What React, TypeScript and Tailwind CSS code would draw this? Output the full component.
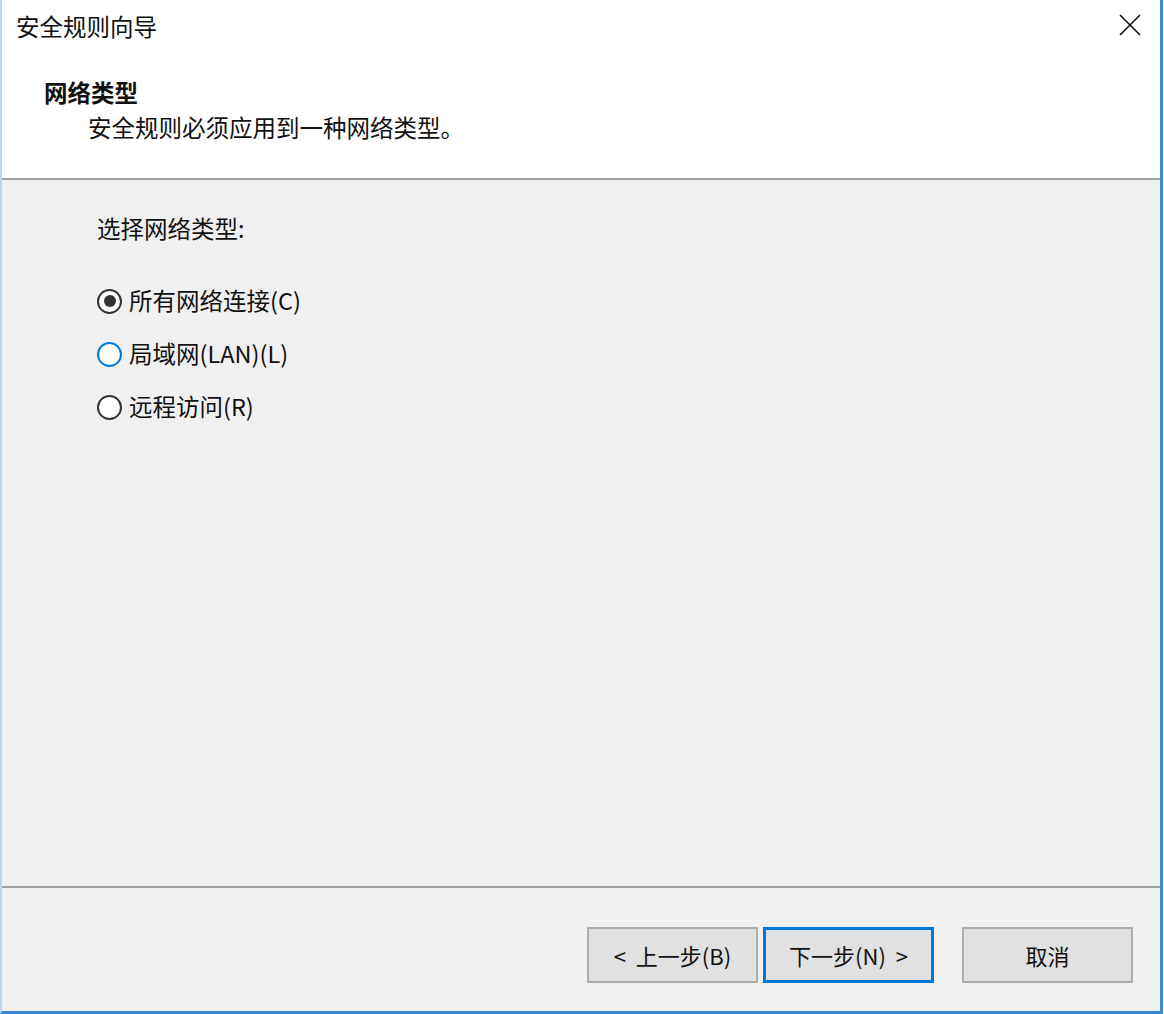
import React from "react";

const font = { fontFamily: '"Noto Sans CJK SC", "Noto Sans", sans-serif' };

const Radio = ({ checked, focus, label }: { checked?: boolean; focus?: boolean; label: string }) => {
  return (
    <div className="flex items-center h-[26px] gap-[7px]">
      <span
        className={
          "w-[25px] h-[25px] rounded-full bg-white flex items-center justify-center border-2 " +
          (focus ? "border-[#0078d7]" : "border-[#333333]")
        }
      >
        {checked && <span className="w-[12px] h-[12px] rounded-full bg-[#333333]" />}
      </span>
      <span className="text-[23.5px] text-[#111]">{label}</span>
    </div>
  );
};

const Button = ({ children, primary }: { children: React.ReactNode; primary?: boolean }) => {
  return (
    <button
      className={
        "w-[171px] h-[56px] bg-[#e1e1e1] text-[22px] text-[#111] flex items-center justify-center " +
        (primary ? "border-[3px] border-[#0078d7]" : "border-2 border-[#adadad]")
      }
    >
      {children}
    </button>
  );
};

export default function App() {
  return (
    <div className="w-[1164px] h-[1014px] bg-white" style={font}>
      <div className="w-[1163px] h-[1014px] flex flex-col border-l-2 border-l-[#b9d6f2] border-r-[3px] border-r-[#3b8ad9] border-b-[3px] border-b-[#3b8ad9]">
        {/* HEADER */}
        <div className="h-[180px] bg-white border-b-2 border-b-[#a0a0a0] flex flex-col">
          <div className="flex items-start justify-between pl-[14px] pr-[18px] pt-[9px]">
            <span className="text-[23.5px] text-[#111]">安全规则向导</span>
            <svg width="24" height="24" viewBox="0 0 24 24" className="mt-[4px]">
              <path d="M2 2 L22 22 M22 2 L2 22" stroke="#111" strokeWidth="1.6" />
            </svg>
          </div>
          <div className="pl-[42px] pt-[33px] text-[23.5px] font-bold text-[#111] leading-[30px]">网络类型</div>
          <div className="pl-[86px] pt-[5px] text-[23.5px] text-[#111] leading-[30px]">安全规则必须应用到一种网络类型。</div>
        </div>
        {/* BODY */}
        <div className="flex-1 bg-[#f0f0f0] flex flex-col pl-[95px] pt-[33px]">
          <div className="text-[23.5px] text-[#111] leading-[30px]">选择网络类型:</div>
          <div className="flex flex-col gap-[27px] mt-[45px]">
            <Radio checked label="所有网络连接(C)" />
            <Radio focus label="局域网(LAN)(L)" />
            <Radio label="远程访问(R)" />
          </div>
        </div>
        {/* FOOTER */}
        <div className="h-[125px] bg-[#f0f0f0] border-t-2 border-t-[#a0a0a0] flex items-start justify-end pr-[27px] pt-[39px]">
          <div className="flex">
            <Button>&lt;&nbsp;&nbsp;上一步(B)</Button>
            <div className="w-[5px]" />
            <Button primary>下一步(N)&nbsp;&nbsp;&gt;</Button>
            <div className="w-[28px]" />
            <Button>取消</Button>
          </div>
        </div>
      </div>
    </div>
  );
}
